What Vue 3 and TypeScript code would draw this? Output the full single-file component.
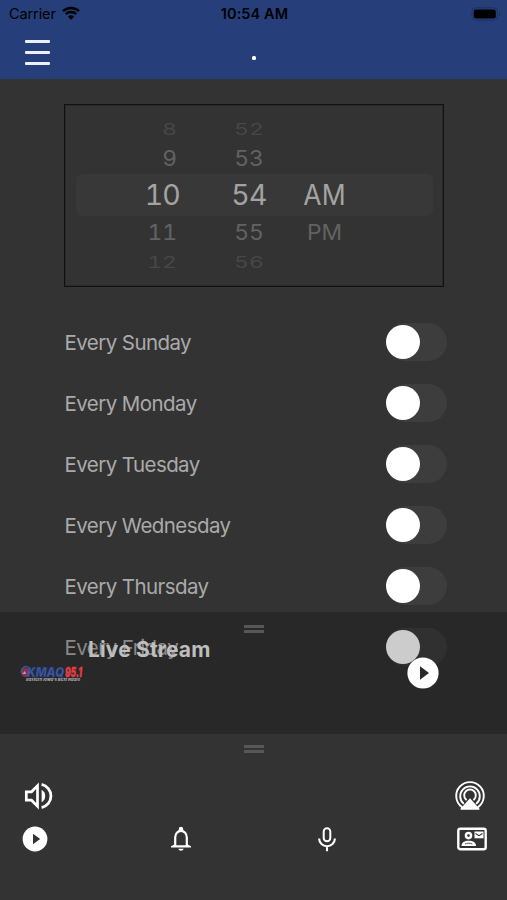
<script setup lang="ts">
interface PickerRow {
  hour: string
  minute: string
  period: string
  kind: string
}

const pickerRows: PickerRow[] = [
  { hour: '8', minute: '52', period: '', kind: 'far top' },
  { hour: '9', minute: '53', period: '', kind: 'near upper' },
  { hour: '10', minute: '54', period: 'AM', kind: 'selected' },
  { hour: '11', minute: '55', period: 'PM', kind: 'near lower' },
  { hour: '12', minute: '56', period: '', kind: 'far bottom' },
]

const days: string[] = ['Sunday', 'Monday', 'Tuesday', 'Wednesday', 'Thursday', 'Friday']
</script>

<template>
  <div class="screen">
    <header class="header">
      <div class="status">
        <div class="carrier">
          <span>Carrier</span>
          <svg class="wifi" width="18" height="14" viewBox="0 0 18 14">
            <path d="M1 5.2a11.6 11.6 0 0 1 16 0M3.8 8.2a7.5 7.5 0 0 1 10.400 0" fill="none" stroke="#000" stroke-width="2.5" />
            <path d="M5.900 10.700a4.500 4.500 0 0 1 6.200 0L9 13.800z" fill="#000" />
          </svg>
        </div>
        <span class="clock">10:54 AM</span>
        <svg class="battery" width="30" height="14" viewBox="0 0 30 14">
          <rect x="1" y=".8" width="25.500" height="12.400" rx="3.800" fill="none" stroke="#1b3164" />
          <rect x="2.800" y="2.600" width="22" height="8.800" rx="2.200" fill="#000" />
          <path d="M28 5c1.500.6 1.500 3.400 0 4z" fill="#1b3164" />
        </svg>
      </div>
      <div class="nav">
        <div class="menu"><i></i><i></i><i></i></div>
        <span class="dot"></span>
        <span></span>
      </div>
    </header>

    <main class="content">
      <section class="picker">
        <div v-for="row in pickerRows" :key="row.hour" class="picker-row" :class="row.kind">
          <span class="hour">{{ row.hour }}</span>
          <span class="minute">{{ row.minute }}</span>
          <span class="period">{{ row.period }}</span>
        </div>
      </section>
      <section class="days">
        <div v-for="day in days" :key="day" class="day">
          <span>Every {{ day }}</span>
          <div class="switch"><div class="knob"></div></div>
        </div>
      </section>
    </main>

    <footer class="dock">
      <section class="player">
        <div class="grip"><i></i><i></i></div>
        <div class="player-body">
          <svg class="logo" width="66" height="18" viewBox="0 0 66 18">
            <circle cx="5.500" cy="7.500" r="4.500" fill="#8c2f42" />
            <path d="M1.500 8a4.500 5 0 0 1 9-2.500" fill="none" stroke="#3d579b" stroke-width="1.500" />
            <path d="M2 9l3-3 1 3z" fill="#a8a5bd" />
            <text x="7" y="11.500" class="logo-name" textLength="37" lengthAdjust="spacingAndGlyphs">KMAQ</text>
            <text x="45" y="11.800" class="logo-number" textLength="17" lengthAdjust="spacingAndGlyphs">95.1</text>
            <text x="6" y="16" class="logo-tag" textLength="54" lengthAdjust="spacingAndGlyphs">Eastern Iowa's Best Radio</text>
          </svg>
          <span class="track">Live Stream</span>
          <svg class="play" width="32" height="32" viewBox="0 0 32 32">
            <circle cx="16" cy="16" r="15.600" fill="#fff" />
            <path d="M13 9.300v13.400L22 16z" fill="#292929" />
          </svg>
        </div>
      </section>
      <section class="tabs">
        <div class="grip"><i></i><i></i></div>
        <div class="tab-row audio">
          <svg width="30" height="28" viewBox="0 0 30 28">
            <path d="M2.300 9.800h5.200l6-6v20.400l-6-6H2.300z" fill="none" stroke="#fff" stroke-width="2.700" />
            <path d="M17.600 7.700a7.300 7.300 0 0 1 0 12.600z" fill="#fff" />
            <path d="M17.600 2.300a12 12 0 0 1 0 23.400" fill="none" stroke="#fff" stroke-width="2.800" />
          </svg>
          <svg width="32" height="32" viewBox="0 0 32 32">
            <g fill="none" stroke="#fff" stroke-width="1.900" stroke-linecap="round">
              <path d="M7.800 27a13.800 13.800 0 1 1 16.400 0" />
              <path d="M9.300 23.300a9.800 9.800 0 1 1 13.400 0" />
              <path d="M12 19.500a5.800 5.800 0 1 1 8 0" />
            </g>
            <path d="M16 18.300l9.300 10.200c.5.700.2 1.300-.6 1.300H7.300c-.8 0-1.100-.6-.6-1.300z" fill="#fff" />
          </svg>
        </div>
        <div class="tab-row actions">
          <svg width="30" height="26" viewBox="0 0 26 26">
            <circle cx="13" cy="13" r="12.400" fill="#fff" />
            <path d="M11 7.800v10.400l7.200-5.200z" fill="#333" />
          </svg>
          <svg width="30" height="26" viewBox="0 0 24 26">
            <path d="M6.200 20v-8.500a5.800 6.700 0 0 1 11.600 0V20" fill="none" stroke="#fff" stroke-width="2.200" />
            <path d="M9.800 4.200V3a2.200 2.200 0 0 1 4.400 0v1.200zM6.200 18 2 20.300v1.200h20v-1.200L17.800 18v1.300H6.200zM9.400 22.800h5.200c-.3 1.300-1.200 2-2.600 2s-2.300-.7-2.600-2z" fill="#fff" />
          </svg>
          <svg width="30" height="26" viewBox="0 0 24 26">
            <rect x="8.700" y="2.300" width="6.600" height="13" rx="3.300" fill="none" stroke="#fff" stroke-width="2" />
            <path d="M4.200 12.500v.4a7.800 7.300 0 0 0 15.600 0v-.4M12 20.200v5" fill="none" stroke="#fff" stroke-width="2.100" />
          </svg>
          <svg width="30" height="26" viewBox="0 0 30 26">
            <rect x="1.300" y="2.800" width="27.400" height="20.400" rx="2" fill="none" stroke="#fff" stroke-width="2.400" />
            <circle cx="11.500" cy="9.600" r="2.600" fill="none" stroke="#fff" stroke-width="2.400" />
            <path d="M4.500 20c0-3.500 3-5.200 7.200-5.200s7.300 1.700 7.300 5.200z" fill="#fff" />
            <path d="M8 18c1.500-1 5.800-1 7.300 0" stroke="#555" fill="none" />
            <rect x="17.500" y="5.500" width="9" height="6.800" fill="#fff" />
            <path d="M18.500 7.500l3.500 2.200 3.500-2.200" stroke="#333" stroke-width="1.100" fill="none" />
          </svg>
        </div>
      </section>
    </footer>
  </div>
</template>

<style>
body {
  margin: 0;
  background: #333;
}
</style>

<style scoped>
.screen {
  position: relative;
  width: 507px;
  height: 900px;
  overflow: hidden;
  background: #333;
  font-family: Inter, 'Liberation Sans', sans-serif;
}
.header {
  height: 79px;
  background: #263f7a;
}
.status {
  display: grid;
  grid-template-columns: 1fr auto 1fr;
  align-items: center;
  height: 27px;
  padding: 0 6px 0 9px;
  color: #000;
  font-size: 14.5px;
}
.carrier {
  display: flex;
  align-items: center;
  gap: 6px;
  letter-spacing: -0.1px;
}
.wifi {
  margin-top: -2px;
}
.clock {
  margin-right: 1px;
  font-weight: 600;
  letter-spacing: 0.1px;
}
.battery {
  justify-self: end;
}
.nav {
  display: grid;
  grid-template-columns: 1fr auto 1fr;
  align-items: center;
  height: 50px;
  padding: 0 25px;
}
.menu {
  display: flex;
  flex-direction: column;
  gap: 8px;
  width: 25px;
}
.menu i {
  height: 3px;
  border-radius: 1px;
  background: #edf0fa;
}
.dot {
  width: 4px;
  height: 4px;
  margin-top: 12px;
  border-radius: 1.5px;
  background: #fff;
}
.content {
  padding: 25px 60px 0 64px;
}
.picker {
  box-sizing: border-box;
  width: 380px;
  height: 183px;
  padding: 10px 10px 0 11px;
  border: 1px solid #101010;
  box-shadow: inset 0 0 0 1px #2a2a2a;
}
.picker-row {
  display: grid;
  grid-template-columns: 104px 104px 81px;
  align-items: center;
  color: #626262;
  font-size: 24px;
  font-variant-numeric: tabular-nums;
  border-radius: 6px;
}
.picker-row span {
  line-height: 1;
}
.hour {
  padding-right: 3px;
  text-align: right;
  transform-origin: right;
}
.minute {
  padding-left: 34px;
  text-align: center;
  transform-origin: 69px 50%;
}
.period {
  text-align: center;
}
.selected {
  height: 42px;
  background: #383838;
  color: #a3a3a3;
  font-size: 28.5px;
}
.selected .hour,
.selected .minute {
  letter-spacing: -0.8px;
}
.selected .hour {
  padding-right: 0;
}
.selected .period {
  transform: scaleX(0.93);
}
.upper {
  height: 31px;
}
.lower {
  height: 33px;
}
.near span {
  transform: scale(0.95, 0.92);
}
.far {
  color: #474747;
  font-size: 23px;
}
.far span {
  transform: scaleY(0.67);
}
.top {
  height: 28px;
}
.bottom {
  height: 26px;
}
.days {
  padding-top: 25px;
}
.day {
  display: flex;
  align-items: center;
  justify-content: space-between;
  height: 61px;
  color: #aaa;
  font-size: 20.5px;
  letter-spacing: -0.57px;
}
.day > span {
  padding-left: 0.5px;
}
.switch {
  width: 61px;
  height: 38px;
  margin: -1px 0 0;
  border-radius: 19px;
  background: #3d3d3d;
}
.knob {
  width: 34px;
  height: 34px;
  margin: 2px 0;
  border-radius: 50%;
  background: #fff;
}
.dock {
  position: absolute;
  right: 0;
  bottom: 0;
  left: 0;
}
.player {
  height: 122px;
  background: rgba(0, 0, 0, 0.2);
}
.grip {
  display: flex;
  flex-direction: column;
  align-items: center;
  gap: 2px;
  padding-top: 13px;
}
.grip i {
  width: 20px;
  height: 3px;
  background: #575757;
}
.player-body {
  display: flex;
  align-items: flex-start;
  padding: 2px 68px 0 20px;
}
.logo {
  margin-top: 30px;
}
.logo-name {
  fill: #3a56a5;
  stroke: #202b4d;
  stroke-width: 0.3px;
  font: italic 900 13px Inter, sans-serif;
}
.logo-number {
  fill: #e33d43;
  stroke: #e33d43;
  stroke-width: 0.3px;
  font: italic 900 13.5px Inter, sans-serif;
}
.logo-tag {
  fill: #b0b0b6;
  font: italic 700 4px Inter, sans-serif;
}
.track {
  margin-left: 2px;
  color: #bebebe;
  font-size: 21px;
  font-weight: 700;
  letter-spacing: 0.15px;
  line-height: 30px;
}
.play {
  margin: 22px 0 0 auto;
}
.tabs {
  height: 166px;
  background: #333;
}
.tabs .grip {
  padding-top: 11px;
}
.tab-row {
  display: flex;
  align-items: center;
  justify-content: space-between;
}
.audio {
  height: 32px;
  padding: 27px 21px 0 24px;
}
.actions {
  height: 26px;
  padding: 14px 19.5px 0 20px;
}
</style>
